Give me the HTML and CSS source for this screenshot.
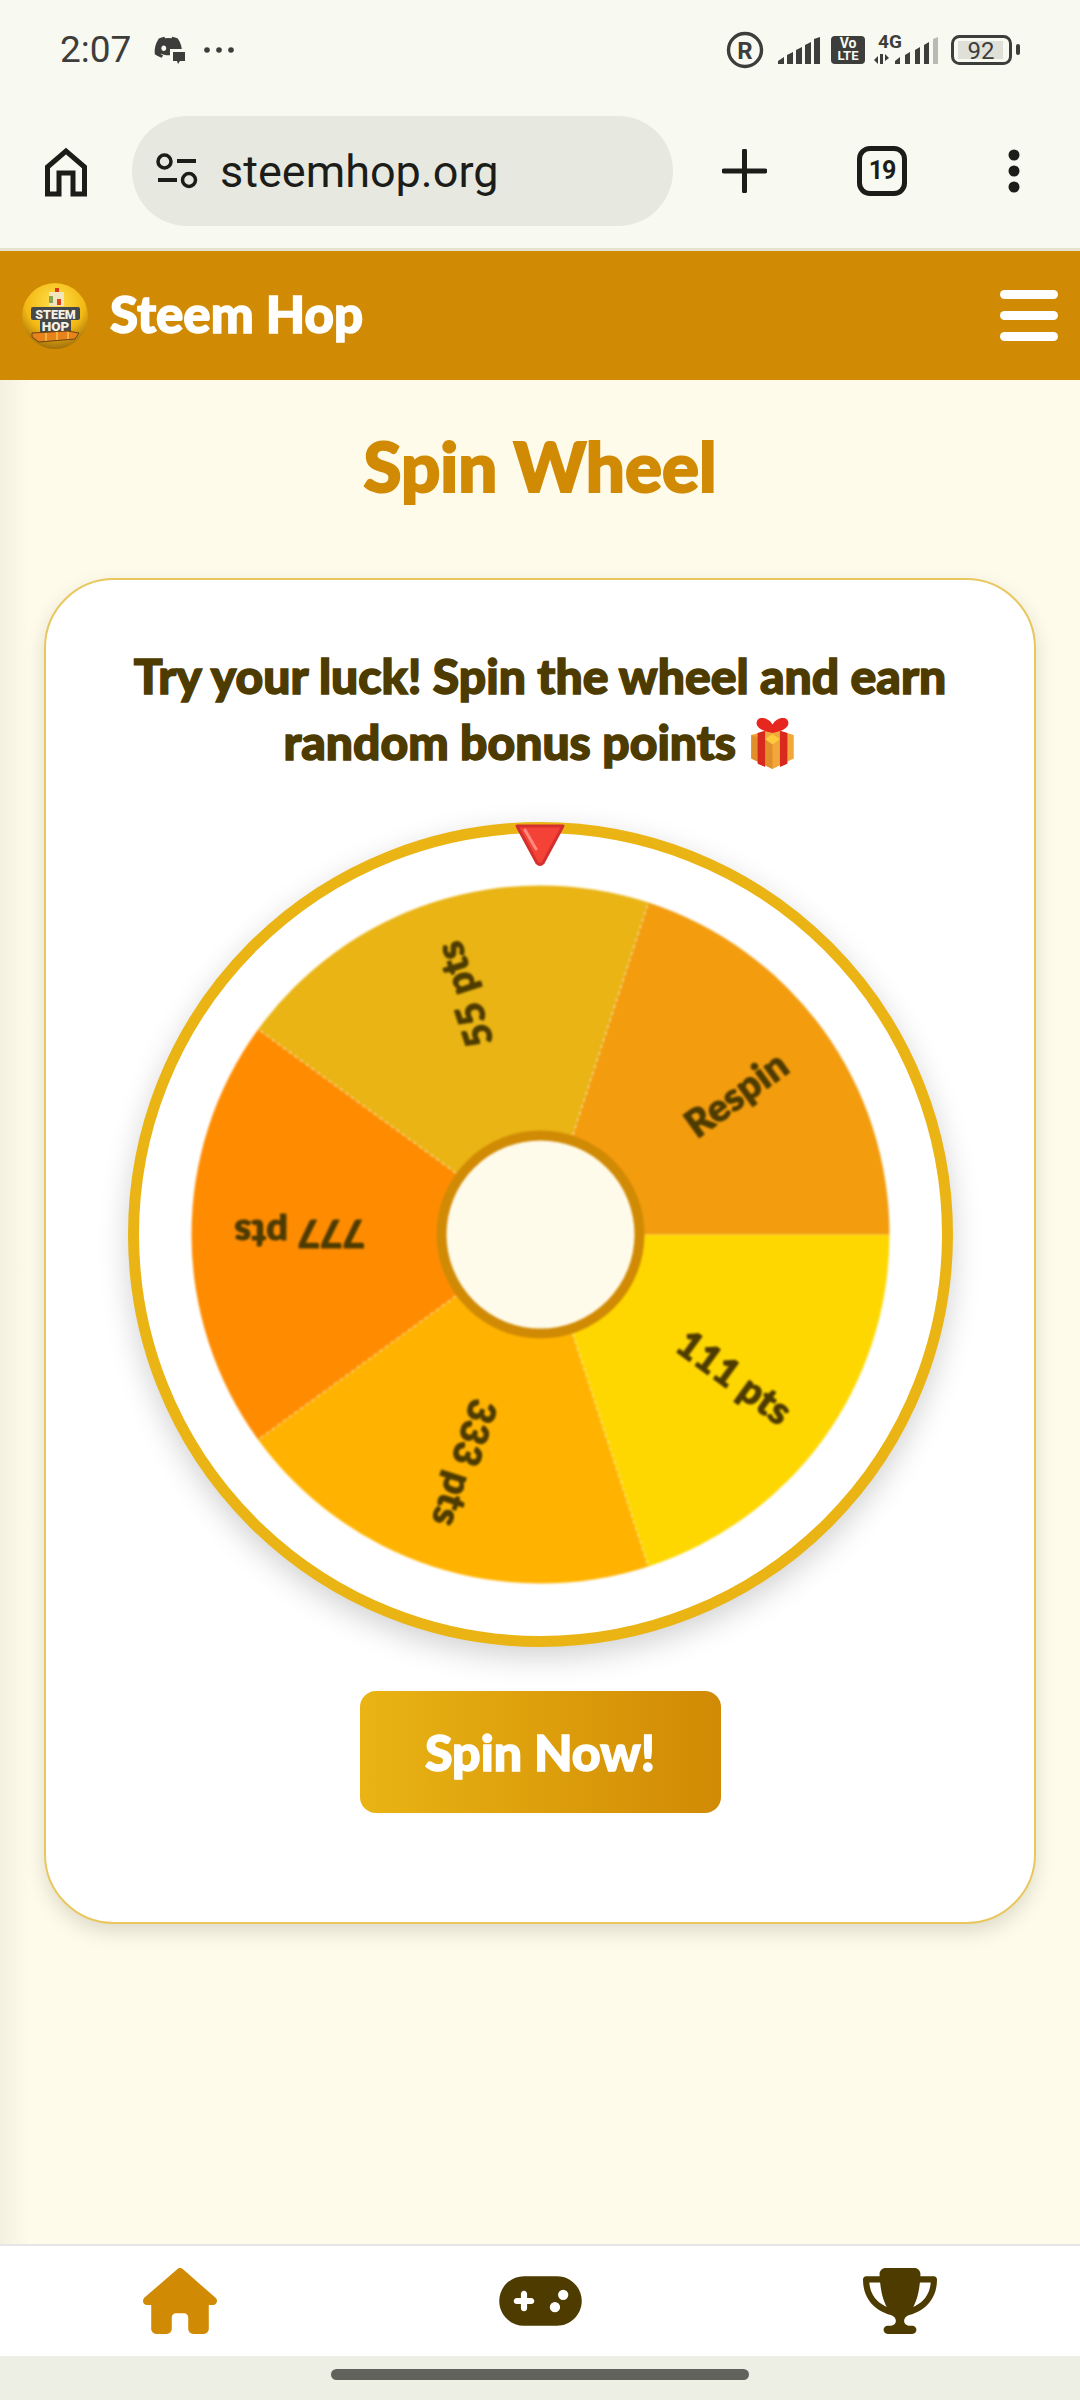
FILE: index.html
```html
<!DOCTYPE html>
<html lang="en">
<head>
<meta charset="utf-8">
<title>Spin Wheel - Steem Hop</title>
<link rel="stylesheet" href="styles.css">
</head>
<body>
<div class="statusbar">
  <div class="status-left">
    <span class="time">2:07</span>
    <svg class="discord" viewBox="0 0 32 28">
      <path fill="#3d3e3b" transform="scale(.0465) translate(-12 -14)" d="M524.531,69.836a1.5,1.5,0,0,0-.764-.7A485.065,485.065,0,0,0,404.081,32.03a1.816,1.816,0,0,0-1.923.91,337.461,337.461,0,0,0-14.9,30.6,447.848,447.848,0,0,0-134.426,0,309.541,309.541,0,0,0-15.135-30.6,1.89,1.89,0,0,0-1.924-.91A483.689,483.689,0,0,0,116.085,69.137a1.712,1.712,0,0,0-.788.676C39.068,183.651,18.186,294.69,28.43,404.354a2.016,2.016,0,0,0,.765,1.375A487.666,487.666,0,0,0,176.02,479.918a1.9,1.9,0,0,0,2.063-.676A348.2,348.2,0,0,0,208.12,430.4a1.86,1.86,0,0,0-1.019-2.588,321.173,321.173,0,0,1-45.868-21.853,1.885,1.885,0,0,1-.185-3.126c3.082-2.309,6.166-4.711,9.109-7.137a1.819,1.819,0,0,1,1.9-.256c96.229,43.917,200.41,43.917,295.5,0a1.812,1.812,0,0,1,1.924.233c2.944,2.426,6.027,4.851,9.132,7.16a1.884,1.884,0,0,1-.162,3.126,301.407,301.407,0,0,1-45.89,21.83,1.875,1.875,0,0,0-1,2.611,391.055,391.055,0,0,0,30.014,48.815,1.864,1.864,0,0,0,2.063.7A486.048,486.048,0,0,0,610.7,405.729a1.882,1.882,0,0,0,.765-1.352C623.729,277.594,590.933,167.465,524.531,69.836ZM222.491,337.58c-28.972,0-52.844-26.587-52.844-59.239S193.056,219.1,222.491,219.1c29.665,0,53.306,26.82,52.843,59.239C275.334,310.993,251.924,337.58,222.491,337.58Z"/>
      <rect x="16" y="13" width="16" height="15" fill="#f8f9f1"/>
      <path fill="#3d3e3b" d="M19 16h12v9h-5l-2 3-1-3h-4z"/>
    </svg>
    <svg class="dots" viewBox="0 0 30 6"><circle cx="3" cy="3" r="2.8" fill="#3d3e3b"/><circle cx="15" cy="3" r="2.8" fill="#3d3e3b"/><circle cx="27" cy="3" r="2.8" fill="#3d3e3b"/></svg>
  </div>
  <svg class="status-right" viewBox="0 0 320 44">
    <circle cx="25" cy="22" r="16.500" fill="none" stroke="#3d3e3b" stroke-width="3.400"/>
    <text x="25" y="30.500" class="st-r">R</text>
    <g fill="#3d3e3b">
      <path d="M58 36v-3l6-4v7zM67 36V27l6-3v12zM76 36V22l6-3v17zM85 36V17l6-3v22zM94 36V11l6-2v27z"/>
      <rect x="111" y="8" width="34" height="28" rx="4"/>
    </g>
    <text x="128" y="20" class="st-vo">Vo</text>
    <text x="128" y="32" class="st-lte">LTE</text>
    <text x="170" y="20" class="st-4g">4G</text>
    <g fill="#3d3e3b">
      <path d="M154 32l4-4v8zM160 26h3v10h-3zM165 26l4 4-4 3zM175 36v-3l5-4v7zM185 36V27l5-3v12zM195 36V22l5-3v17zM204 36V17l5-3v22z"/>
    </g>
    <path d="M213 36V11l5-2v27z" fill="#b9bab2"/>
    <rect x="232.500" y="8.500" width="58" height="27" rx="7" fill="none" stroke="#3d3e3b" stroke-width="3"/>
    <rect x="238" y="13" width="45" height="18" fill="#dfe0d8"/>
    <rect x="296" y="16" width="4" height="11" rx="2" fill="#3d3e3b"/>
    <text x="261" y="31" class="st-batt">92</text>
  </svg>
</div>

<div class="toolbar">
  <svg class="tool-home" viewBox="0 0 44 50"><path d="M3.500 47V20L22 4l18.500 16v27H29V26H15v21z" fill="none" stroke="#1c1d18" stroke-width="5"/></svg>
  <div class="address">
    <svg class="tune" viewBox="0 0 42 36">
      <circle cx="8.500" cy="8.500" r="6.500" fill="none" stroke="#1c1d18" stroke-width="3.500"/>
      <path d="M21 8h19M2 27h19" stroke="#1c1d18" stroke-width="4" fill="none"/>
      <circle cx="33" cy="27" r="6.500" fill="none" stroke="#1c1d18" stroke-width="3.500"/>
    </svg>
    <span class="url">steemhop.org</span>
  </div>
  <svg class="tool-plus" viewBox="0 0 45 44"><path d="M22.500 2v40M2 22h41" stroke="#1c1d18" stroke-width="5" stroke-linecap="round"/></svg>
  <div class="tabs">19</div>
  <svg class="tool-menu" viewBox="0 0 12 44"><circle cx="6" cy="6" r="5.500" fill="#1c1d18"/><circle cx="6" cy="22" r="5.500" fill="#1c1d18"/><circle cx="6" cy="38" r="5.500" fill="#1c1d18"/></svg>
</div>

<header class="site-header">
  <div class="brand">
    <svg class="logo" viewBox="0 0 66 66">
      <defs>
        <radialGradient id="ball" cx="50%" cy="30%" r="72%">
          <stop offset="0" stop-color="#ffe14a"/>
          <stop offset=".62" stop-color="#f3b914"/>
          <stop offset="1" stop-color="#9c6a0a"/>
        </radialGradient>
      </defs>
      <circle cx="33" cy="33" r="33" fill="url(#ball)"/>
      <rect x="27" y="9" width="15" height="14" fill="#f0e5bb"/>
      <rect x="27" y="13" width="4" height="7" fill="#8aa35a"/>
      <rect x="33" y="5" width="4" height="4" fill="#d9361c"/>
      <rect x="35" y="16" width="4" height="6" fill="#d9461c"/>
      <rect x="9" y="24" width="49" height="13" rx="2" fill="#46484a"/>
      <rect x="18" y="36" width="31" height="14" rx="2" fill="#46484a"/>
      <path d="M10 50l36-2 11 2-4 6-36 3-7-5z" fill="#e8831c" stroke="#6d4410" stroke-width="1"/>
      <path d="M24 50v8M35 49v8M46 49v7" stroke="#f7c04a" stroke-width="1.500"/>
      <text x="33.500" y="35.500" class="logo-a">STEEM</text>
      <text x="33.500" y="48" class="logo-b">HOP</text>
    </svg>
    <span class="brand-name">Steem Hop</span>
  </div>
  <div class="hamburger"><span class="bar"></span><span class="bar"></span><span class="bar"></span></div>
</header>

<main class="page">
  <h1 class="title">Spin Wheel</h1>
  <section class="card">
    <p class="lead">Try your luck! Spin the wheel and earn random bonus points <svg class="gift" viewBox="0 0 46 48">
      <path d="M3 16l20-6 20 6v22L23 48 3 38z" fill="#f2a73b"/>
      <path d="M23 22L3 16v22l20 10z" fill="#e08f2a"/>
      <path d="M9 14v29l7 3V12zM30 12v34l7-3V14z" fill="#d8291f"/>
      <path d="M23 6C18-2 8-2 8 5c0 5 8 8 15 9 7-1 15-4 15-9 0-7-10-7-15 1z" fill="#e7261f"/>
      <path d="M23 15l7 5-7 5-7-5z" fill="#ffcb3d"/>
    </svg></p>
    <div class="wheel">
      <svg class="wheel-svg" viewBox="0 0 803 803">
        <g class="wheel-soft">
          <path d="M401.500 401.500L750.500 401.500A349 349 0 0 1 509.350 733.420Z" fill="#ffd700"/>
          <path d="M401.500 401.500L509.350 733.420A349 349 0 0 1 119.150 606.640Z" fill="#ffb300"/>
          <path d="M401.500 401.500L119.150 606.640A349 349 0 0 1 119.150 196.360Z" fill="#ff8c00"/>
          <path d="M401.500 401.500L119.150 196.360A349 349 0 0 1 509.350 69.580Z" fill="#e9b414"/>
          <path d="M401.500 401.500L509.350 69.580A349 349 0 0 1 750.500 401.500Z" fill="#f39c0e"/>
          <path class="seam" d="M401.500 401.500L509.350 733.420M401.500 401.500L119.150 606.640M401.500 401.500L119.150 196.360M401.500 401.500L509.350 69.580"/>
          <text class="slice-label" transform="translate(401.500 401.500) rotate(36) translate(241 0)">111 pts</text>
          <text class="slice-label" transform="translate(401.500 401.500) rotate(108) translate(241 0)">333 pts</text>
          <text class="slice-label" transform="translate(401.500 401.500) rotate(180) translate(241 0)">777 pts</text>
          <text class="slice-label" transform="translate(401.500 401.500) rotate(252) translate(252 0)">55 pts</text>
          <text class="slice-label" transform="translate(401.500 401.500) rotate(324) translate(241 0)">Respin</text>
          <circle cx="401.500" cy="401.500" r="99" fill="#fffbea" stroke="#d18a04" stroke-width="10"/>
        </g>
      </svg>
      <svg class="pointer" viewBox="0 0 52 44">
        <path d="M3 3h46L29 40q-3 3-6 0z" fill="#f44336" stroke="#d32f2f" stroke-width="3" stroke-linejoin="round"/>
        <path d="M11 7l11 19" stroke="#ff8a80" stroke-width="3" stroke-linecap="round"/>
      </svg>
    </div>
    <button class="spin-btn" type="button">Spin Now!</button>
  </section>
  <div class="edge-shade"></div>
</main>

<nav class="bottom-nav">
  <a class="nav-item">
    <svg class="nav-icon" viewBox="0 0 576 512"><path fill="#d18a04" d="M575.8 255.500c0 18-15 32.100-32 32.100h-32l.7 160.200c0 2.700-.2 5.400-.5 8.100V472c0 22.100-17.900 40-40 40H456c-1.100 0-2.200 0-3.300-.1c-1.400 .1-2.800 .1-4.200 .1H416 392c-22.100 0-40-17.900-40-40V448 384c0-17.700-14.300-32-32-32H256c-17.700 0-32 14.300-32 32v64 24c0 22.100-17.900 40-40 40H160 128.100c-1.500 0-3-.1-4.500-.2c-1.200 .1-2.400 .2-3.600 .2H104c-22.100 0-40-17.900-40-40V360c0-.9 0-1.900 .1-2.800V287.600H32c-18 0-32-14-32-32.100c0-9 3-17 10-24L266.400 8c7-7 15-8 22-8s15 2 21 7L564.800 231.500c8 7 12 15 11 24z"/></svg>
  </a>
  <a class="nav-item">
    <svg class="nav-icon" viewBox="0 0 640 512"><path fill="#4d3b00" d="M192 64C86 64 0 150 0 256S86 448 192 448H448c106 0 192-86 192-192s-86-192-192-192H192zM496 168a40 40 0 1 1 0 80 40 40 0 1 1 0-80zM392 304a40 40 0 1 1 80 0 40 40 0 1 1 -80 0zM168 200c0-13.300 10.700-24 24-24s24 10.700 24 24v32h32c13.300 0 24 10.700 24 24s-10.700 24-24 24H216v32c0 13.300-10.700 24-24 24s-24-10.700-24-24V280H136c-13.300 0-24-10.700-24-24s10.700-24 24-24h32V200z"/></svg>
  </a>
  <a class="nav-item">
    <svg class="nav-icon" viewBox="0 0 576 512"><path fill="#4d3b00" d="M400 0H176c-26.500 0-48.100 21.800-47.100 48.200c.2 5.300 .4 10.600 .7 15.800H24C10.700 64 0 74.700 0 88c0 92.600 33.500 157 78.500 200.700c44.300 43.100 98.300 64.800 138.100 75.800c23.400 6.500 39.400 26 39.400 45.600c0 20.900-17 37.900-37.900 37.900H192c-17.700 0-32 14.300-32 32s14.300 32 32 32H384c17.700 0 32-14.300 32-32s-14.300-32-32-32H357.900C337 448 320 431 320 410.100c0-19.600 15.900-39.200 39.400-45.600c39.900-11 93.900-32.700 138.200-75.800C542.500 245 576 180.600 576 88c0-13.300-10.700-24-24-24H446.400c.3-5.200 .5-10.400 .7-15.800C448.100 21.800 426.500 0 400 0zM48.900 112h84.400c9.100 90.100 29.200 150.300 51.900 190.600c-24.900-11-50.800-26.500-73.200-48.300c-32-31.100-58-76-63-142.300zM464.100 254.300c-22.400 21.800-48.300 37.300-73.200 48.300c22.700-40.300 42.800-100.500 51.900-190.600h84.400c-5.100 66.300-31.100 111.200-63 142.300z"/></svg>
  </a>
</nav>
<div class="gesture"><span class="gesture-pill"></span></div>
</body>
</html>
```

FILE: styles.css
```css
* { box-sizing: border-box; }
html, body { margin: 0; padding: 0; }
body {
  width: 1080px;
  height: 2400px;
  display: flex;
  flex-direction: column;
  background: #fffbea;
  font-family: "Lato", "Noto Sans", sans-serif;
  overflow: hidden;
}

/* status bar */
.statusbar {
  height: 100px;
  background: #f8f9f1;
  padding: 30px 40px 0 60px;
  display: flex;
  justify-content: space-between;
  align-items: flex-start;
}
.status-left { display: flex; align-items: center; height: 40px; }
.time { font: 400 37px/40px "Roboto", sans-serif; color: #3d3e3b; width: 94px; }
.discord { width: 32px; height: 28px; }
.dots { width: 30px; height: 6px; margin-left: 18px; }
.status-right { width: 320px; height: 44px; margin-top: -2px; }
.st-r { font: 700 24px "Roboto", sans-serif; fill: #3d3e3b; text-anchor: middle; }
.st-vo { font: 700 14px "Roboto", sans-serif; fill: #f8f9f1; text-anchor: middle; }
.st-lte { font: 700 13px "Roboto", sans-serif; fill: #f8f9f1; text-anchor: middle; }
.st-4g { font: 700 19px "Roboto", sans-serif; fill: #3d3e3b; text-anchor: middle; }
.st-batt { font: 400 24px "Roboto", sans-serif; fill: #3d3e3b; text-anchor: middle; }

/* browser toolbar */
.toolbar {
  height: 151px;
  background: #f8f9f1;
  border-bottom: 3px solid #e3e2cf;
  padding: 16px 0 0 44px;
  display: flex;
  align-items: flex-start;
}
.tool-home { width: 44px; height: 50px; margin-top: 31px; }
.address {
  width: 541px;
  height: 110px;
  margin-left: 44px;
  border-radius: 55px;
  background: #e7e9e1;
  display: flex;
  align-items: center;
  padding-left: 24px;
}
.tune { width: 42px; height: 36px; }
.url { font: 400 45px/1 "Roboto", sans-serif; color: #1c1d18; margin-left: 22px; }
.tool-plus { width: 45px; height: 44px; margin: 33px 0 0 49px; }
.tabs {
  width: 50px;
  height: 50px;
  margin: 30px 0 0 90px;
  border: 5px solid #1c1d18;
  border-radius: 13px;
  font: 700 25px/40px "Roboto", sans-serif;
  color: #1c1d18;
  text-align: center;
  letter-spacing: -1px;
}
.tool-menu { width: 12px; height: 44px; margin: 33px 0 0 101px; }

/* site header */
.site-header {
  height: 129px;
  background: #d18a04;
  padding: 0 22px;
  display: flex;
  align-items: center;
  justify-content: space-between;
}
.brand { display: flex; align-items: center; gap: 22px; }
.logo { width: 66px; height: 66px; display: block; }
.logo-a, .logo-b {
  font: 900 13.500px "Roboto", sans-serif;
  fill: #f4f1e3;
  text-anchor: middle;
}
.logo-a { font-size: 12.500px; }
.brand-name {
  font-weight: 900;
  font-size: 51px;
  line-height: 1;
  color: #fff;
  padding-bottom: 5px;
  -webkit-text-stroke: 1.500px #fff;
}
.hamburger { display: flex; flex-direction: column; gap: 12px; }
.bar { display: block; width: 58px; height: 9px; border-radius: 5px; background: #fff; }

/* page */
.page {
  flex: 1;
  position: relative;
  padding-top: 55px;
  background: #fffbea;
}
.title {
  margin: 0 0 81px;
  height: 62px;
  font-weight: 900;
  font-size: 69px;
  line-height: 62px;
  color: #d18a04;
  text-align: center;
  -webkit-text-stroke: 2px #d18a04;
}
.card {
  margin: 0 44px;
  height: 1346px;
  background: #fff;
  border: 2px solid #e9c75f;
  border-radius: 70px;
  box-shadow: 0 8px 20px rgba(0, 0, 0, .13);
  padding: 63px 40px 0;
  display: flex;
  flex-direction: column;
  align-items: center;
}
.lead {
  margin: 0 0 47px;
  width: 880px;
  font-weight: 900;
  font-size: 48px;
  line-height: 66px;
  color: #4d3b00;
  text-align: center;
  -webkit-text-stroke: 1.500px #4d3b00;
}
.gift { width: 49px; height: 51px; vertical-align: -9px; }
.wheel {
  flex: none;
  position: relative;
  width: 825px;
  height: 825px;
  border: 11px solid #e9b414;
  border-radius: 50%;
  background: #fff;
  box-shadow: 0 10px 30px rgba(0, 0, 0, .18);
}
.wheel-svg { display: block; width: 803px; height: 803px; }
.wheel-soft { filter: blur(.9px); }
.seam { fill: none; stroke: #fff; stroke-width: 1.500; stroke-dasharray: 3 4; opacity: .55; }
.slice-label {
  font-family: "Lato", sans-serif;
  font-weight: 900;
  font-size: 38px;
  letter-spacing: .5px;
  fill: #4d3b00;
  stroke: #4d3b00;
  stroke-width: 1.200;
  stroke-linejoin: round;
  text-anchor: middle;
  dominant-baseline: central;
}
.pointer {
  position: absolute;
  left: 375px;
  top: -10px;
  width: 52px;
  height: 44px;
}
.spin-btn {
  flex: none;
  margin-top: 44px;
  width: 361px;
  height: 122px;
  border: 0;
  border-radius: 16px;
  background: linear-gradient(90deg, #e9b414, #d18a04);
  color: #fff;
  font-family: "Lato", sans-serif;
  font-weight: 900;
  font-size: 50px;
  -webkit-text-stroke: 1.500px #fff;
}
.edge-shade {
  position: absolute;
  left: 0;
  top: 0;
  bottom: 0;
  width: 30px;
  background: linear-gradient(90deg, rgba(120, 120, 120, .08), rgba(120, 120, 120, 0));
}

/* bottom navigation */
.bottom-nav {
  height: 112px;
  background: #fff;
  border-top: 2px solid #e6e6e6;
  display: grid;
  grid-template-columns: repeat(3, 1fr);
  align-items: center;
  justify-items: center;
}
.nav-item { display: block; height: 66px; }
.nav-icon { display: block; height: 66px; }
.nav-item:nth-child(1) .nav-icon { width: 74px; }
.nav-item:nth-child(2) .nav-icon { width: 83px; }
.nav-item:nth-child(3) .nav-icon { width: 74px; }

/* gesture bar */
.gesture {
  height: 44px;
  background: #edefe4;
  padding-top: 13px;
  display: flex;
  justify-content: center;
  align-items: flex-start;
}
.gesture-pill { width: 418px; height: 11px; border-radius: 6px; background: #61625c; }
```
